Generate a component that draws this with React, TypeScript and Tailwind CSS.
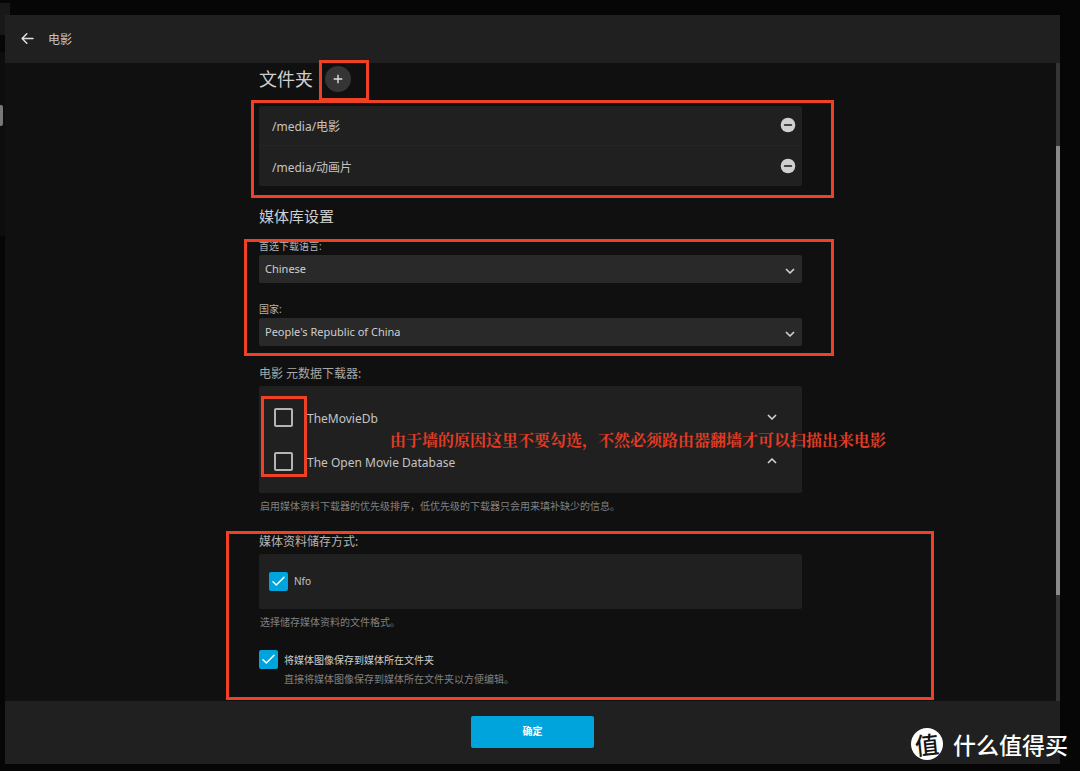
import { useState } from "react";
import type { ReactNode } from "react";

const folders = ["/media/电影", "/media/动画片"];

const fetchers = [
  { name: "TheMovieDb", direction: "down" },
  { name: "The Open Movie Database", direction: "up" },
] as const;

const Chevron = ({ up = false }: { up?: boolean }) => (
  <svg viewBox="0 0 12 12" className="size-3" fill="none" stroke="#cfcfcf" strokeWidth="1.7">
    <path d={up ? "M2 8 6 4l4 4" : "M2 4l4 4 4-4"} strokeLinejoin="round" />
  </svg>
);

const Checkbox = ({ id, initial = false }: { id: string; initial?: boolean }) => {
  const [checked, setChecked] = useState(initial);

  return (
    <span className="relative block size-[19px] shrink-0">
      <input
        id={id}
        type="checkbox"
        checked={checked}
        onChange={(e) => setChecked(e.target.checked)}
        className="block size-full appearance-none rounded-xs border-2 border-[#b4b4b4] checked:border-[#00a4dc] checked:bg-[#00a4dc]"
      />
      {checked && (
        <svg
          viewBox="0 0 19 19"
          className="pointer-events-none absolute inset-0"
          fill="none"
          stroke="#fff"
          strokeWidth="1.5"
        >
          <path d="M4 9.8 7.3 13 15 5.3" strokeLinecap="round" strokeLinejoin="round" />
        </svg>
      )}
    </span>
  );
};

const Highlight = ({ className }: { className: string }) => (
  <div className={`pointer-events-none absolute z-10 border-3 border-[#ee4126] ${className}`} />
);

const SelectField = ({ id, label, value }: { id: string; label: string; value: string }) => (
  <div>
    <label htmlFor={id} className="block text-[10px] leading-3 text-[#b4b4b4]">
      {label}
    </label>
    <div className="relative mt-[3px]">
      <select
        id={id}
        defaultValue={value}
        className="block h-7 w-full appearance-none rounded-xs bg-[#292929] px-1.5 text-[11px] text-[#cfcfcf]"
      >
        <option>{value}</option>
      </select>
      <span className="pointer-events-none absolute inset-y-0 right-1.5 flex items-center pt-1">
        <Chevron />
      </span>
    </div>
  </div>
);

const Help = ({ children }: { children: ReactNode }) => (
  <p className="mt-[7px] px-px text-[10px] leading-3 text-[#808080]">{children}</p>
);

const Header = () => (
  <header className="flex h-12 items-center gap-[11px] bg-[#202020] px-3.5">
    <button aria-label="返回">
      <svg viewBox="0 0 18 18" className="size-[18px]" fill="none" stroke="#dedede" strokeWidth="1.5">
        <path d="M14 8.5H3.2M7.8 3.7 3.1 8.5l4.7 4.8" strokeLinecap="round" strokeLinejoin="round" />
      </svg>
    </button>
    <h1 className="pt-0.5 text-xs text-[#c4c4c4]">电影</h1>
  </header>
);

const Folders = () => (
  <section>
    <div className="flex items-center gap-3">
      <h2 className="text-lg leading-6 text-[#cfcfcf]">文件夹</h2>
      <div className="relative">
        <button
          aria-label="添加"
          className="flex size-[26px] items-center justify-center rounded-full bg-[#353535]"
        >
          <svg viewBox="0 0 16 16" className="size-4" stroke="#dedede" strokeWidth="1.4">
            <path d="M8 3.7v8.6M3.7 8h8.6" />
          </svg>
        </button>
        <Highlight className="-top-1.5 -right-[18px] -bottom-[9px] -left-1.5" />
      </div>
    </div>
    <div className="relative mt-3.5">
      <ul className="divide-y divide-[#242424] rounded-xs bg-[#202020]">
        {folders.map((folder) => (
          <li key={folder} className="flex h-10 items-center justify-between pr-1.5 pb-px pl-[13px]">
            <span className="pt-1 text-xs text-[#c4c4c4]">{folder}</span>
            <button aria-label={`移除 ${folder}`}>
              <svg viewBox="0 0 16 16" className="size-4">
                <circle cx="8" cy="8" r="7.3" fill="#d0d0d0" />
                <path d="M4.7 8h6.6" stroke="#444" strokeWidth="1.8" strokeLinecap="round" />
              </svg>
            </button>
          </li>
        ))}
      </ul>
      <Highlight className="-top-1.5 -right-8 -bottom-3 -left-2" />
    </div>
  </section>
);

const LibrarySettings = () => (
  <section>
    <h2 className="mt-[18px] text-[15px] leading-6 text-[#cfcfcf]">媒体库设置</h2>
    <div className="relative mt-3 space-y-5">
      <SelectField id="language" label="首选下载语言:" value="Chinese" />
      <SelectField id="country" label="国家:" value="People's Republic of China" />
      <Highlight className="-top-px -right-8 -bottom-2.5 -left-[15px]" />
    </div>
  </section>
);

const Fetchers = () => (
  <section className="mt-[18px]">
    <h3 className="text-xs leading-4 text-[#a8a8a8]">电影 元数据下载器:</h3>
    <div className="relative mt-1 rounded-xs bg-[#202020] pt-[9px] pb-2.5">
      {fetchers.map(({ name, direction }) => (
        <div key={name} className="flex h-11 items-center pr-6 pl-[15px]">
          <Checkbox id={name} />
          <label htmlFor={name} className="flex-1 pt-1 pl-3.5 text-xs text-[#c4c4c4]">
            {name}
          </label>
          <button aria-label={direction === "up" ? "上移" : "下移"}>
            <Chevron up={direction === "up"} />
          </button>
        </div>
      ))}
      <Highlight className="top-2.5 bottom-4 left-0.5 w-[46px]" />
      <p className="absolute top-[42px] left-[131px] z-10 font-['Noto_Serif_CJK_SC','Noto_Sans_CJK_SC',serif] text-base font-bold whitespace-nowrap text-[#e03c24]">
        由于墙的原因这里不要勾选，不然必须路由器翻墙才可以扫描出来电影
      </p>
    </div>
    <Help>启用媒体资料下载器的优先级排序，低优先级的下载器只会用来填补缺少的信息。</Help>
  </section>
);

const Savers = () => (
  <section className="relative mt-[22px] pb-[15px]">
    <h3 className="text-xs leading-4 text-[#b4b4b4]">媒体资料储存方式:</h3>
    <div className="mt-1 flex h-[55px] items-center gap-1.5 rounded-xs bg-[#202020] px-2.5">
      <Checkbox id="nfo" initial />
      <label htmlFor="nfo" className="text-[10px] text-[#c4c4c4]">
        Nfo
      </label>
    </div>
    <Help>选择储存媒体资料的文件格式。</Help>
    <div className="mt-[22px] flex gap-1.5">
      <Checkbox id="save-images" initial />
      <div className="space-y-1.5 pt-1 text-[10px] leading-[13px]">
        <label htmlFor="save-images" className="block text-[#cfcfcf]">
          将媒体图像保存到媒体所在文件夹
        </label>
        <p className="text-[#808080]">直接将媒体图像保存到媒体所在文件夹以方便编辑。</p>
      </div>
    </div>
    <Highlight className="-top-[3px] -right-[132px] bottom-px -left-[33px]" />
  </section>
);

const Watermark = () => (
  <div className="absolute right-3 bottom-[11px] z-20 flex items-center gap-2.5 font-['Noto_Sans_CJK_SC',sans-serif] text-white">
    <span className="flex size-8 items-center justify-center rounded-full bg-white text-2xl leading-8 font-medium text-[#151515]">
      <span className="-rotate-6">值</span>
    </span>
    <span className="text-[23px] leading-8 font-medium">什么值得买</span>
  </div>
);

export default function App() {
  return (
    <div
      lang="zh-CN"
      className="relative flex min-h-screen flex-col overflow-hidden bg-[#060606] pt-[15px] pr-5 pb-[7px] pl-[5px] font-['Noto_Sans','Noto_Sans_CJK_SC',sans-serif]"
    >
      <div className="absolute top-[3px] left-0 h-8 w-2.5 bg-[#181818]" />
      <div className="absolute top-[52px] left-0 h-[184px] w-[5px] bg-[#0d0d0d]" />
      <div className="absolute top-[105px] left-0 h-[21px] w-[3px] rounded-r-xs bg-[#777]" />

      <div className="relative flex flex-1 flex-col">
        <Header />
        <div className="flex flex-1 bg-[#101010]">
          <main className="flex-1 pt-[3px]">
            <div className="mx-auto max-w-[543px]">
              <Folders />
              <LibrarySettings />
              <Fetchers />
              <Savers />
            </div>
          </main>
          <div className="w-1 bg-[#353535] pt-[83px]">
            <div className="h-[449px] bg-[#8a8a8a]" />
          </div>
        </div>
        <footer className="flex justify-center bg-[#202020] pt-[15px] pb-4">
          <button className="h-8 w-[123px] rounded-xs bg-[#00a4dc] pb-0.5 text-[10px] font-bold text-white">
            确定
          </button>
        </footer>
      </div>
      <Watermark />
    </div>
  );
}
